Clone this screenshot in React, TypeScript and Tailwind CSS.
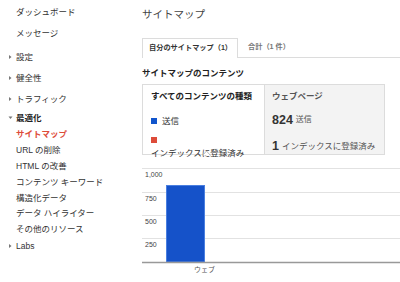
import React from 'react';

const font = { fontFamily: '"Liberation Sans", "Noto Sans CJK JP", sans-serif' };

function Arrow({ down }: { down?: boolean }) {
  return (
    <svg width="7" height="6" viewBox="0 0 7 6" className="shrink-0">
      {down ? <path d="M0.5 1.5 L4.5 1.5 L2.5 4 Z" fill="#777" /> : <path d="M1 1 L3.5 3 L1 5 Z" fill="#777" />}
    </svg>
  );
}

type Item = { label: string; h: string; arrow?: 'right' | 'down'; active?: boolean; bold?: boolean };

const items: Item[] = [
  { label: 'ダッシュボード', h: 'h-[17px]' },
  { label: 'メッセージ', h: 'h-[25px]' },
  { label: '設定', h: 'h-[22px]', arrow: 'right' },
  { label: '健全性', h: 'h-[20px]', arrow: 'right' },
  { label: 'トラフィック', h: 'h-[22px]', arrow: 'right' },
  { label: '最適化', h: 'h-[16px]', arrow: 'down', bold: true },
  { label: 'サイトマップ', h: 'h-[17px]', active: true },
  { label: 'URL の削除', h: 'h-[15px]' },
  { label: 'HTML の改善', h: 'h-[16px]' },
  { label: 'コンテンツ キーワード', h: 'h-[16px]' },
  { label: '構造化データ', h: 'h-[16px]' },
  { label: 'データ ハイライター', h: 'h-[15px]' },
  { label: 'その他のリソース', h: 'h-[16px]' },
  { label: 'Labs', h: 'h-[18px]', arrow: 'right' },
];

function Sidebar() {
  return (
    <div className="w-[142px] shrink-0 pt-[4px]">
      {items.map((it) => (
        <div
          key={it.label}
          className={`${it.h} flex items-center text-[8.5px] whitespace-nowrap ${it.arrow ? 'pl-[8px]' : 'pl-[16px]'} ${
            it.active ? 'text-[#dd4b39] font-bold' : it.bold ? 'text-[#222] font-bold' : 'text-[#333]'
          }`}
        >
          {it.arrow && (
            <span className="w-[8px]">
              <Arrow down={it.arrow === 'down'} />
            </span>
          )}
          {it.label}
        </div>
      ))}
    </div>
  );
}

function Chart() {
  const grid = [
    { y: 8, label: '1,000' },
    { y: 32, label: '750' },
    { y: 55, label: '500' },
    { y: 78, label: '250' },
  ];
  return (
    <svg width="258" height="122" className="mt-[5px] block">
      {grid.map((g) => (
        <g key={g.label}>
          <line x1="0" x2="258" y1={g.y + 0.5} y2={g.y + 0.5} stroke="#e2e2e2" />
          <text x="3" y={g.y + 8.5} fontSize="7" fill="#444" fontFamily="Liberation Sans, sans-serif">
            {g.label}
          </text>
        </g>
      ))}
      <rect x="24.5" y="25.5" width="38" height="76.5" fill="#1552c9" stroke="#4a7fe0" />
      <line x1="0" x2="258" y1="102.5" y2="102.5" stroke="#999" strokeWidth="1.5" />
      <text x="52" y="112" fontSize="7" fill="#555" fontFamily="Noto Sans CJK JP, sans-serif">
        ウェブ
      </text>
    </svg>
  );
}

export default function App() {
  return (
    <div className="w-[400px] h-[282px] overflow-hidden bg-white flex" style={font}>
      <Sidebar />
      <div className="flex-1 min-w-0">
        <div className="h-[30px] flex items-center text-[10.5px] text-[#444]">サイトマップ</div>

        <div className="mt-[8px] flex border-b border-[#dcdcdc] h-[20px]">
          <div className="w-[96px] h-[20px] border border-b-0 border-[#dcdcdc] bg-white flex items-center pl-[6px] text-[7.2px] font-bold text-[#333] whitespace-nowrap">
            自分のサイトマップ（1）
          </div>
          <div className="pl-[10px] flex items-center text-[7.2px] font-bold text-[#777] whitespace-nowrap">
            合計（1 件）
          </div>
        </div>

        <div className="mt-[8px] h-[14px] flex items-center text-[8.5px] font-bold text-[#222] whitespace-nowrap">
          サイトマップのコンテンツ
        </div>

        <div className="relative mt-[4px] w-[243px] h-[71px] border border-[#dcdcdc] flex">
          <div className="w-[122px] border-r border-[#dcdcdc] pl-[8px] pt-[5px] whitespace-nowrap">
            <div className="h-[12px] flex items-center text-[8.5px] font-bold text-[#222]">すべてのコンテンツの種類</div>
            <div className="mt-[14px] h-[10px] flex items-center text-[8.5px] text-[#333]">
              <span className="w-[6px] h-[6px] bg-[#1155cc] mr-[5px]" />
              送信
            </div>
            <div className="mt-[9px] h-[10px] flex items-center">
              <span className="w-[6px] h-[6px] bg-[#dd4b39]" />
            </div>
            <div className="mt-[3px] h-[10px] flex items-center text-[8.5px] text-[#333]">インデックスに登録済み</div>
          </div>
          <div className="flex-1 bg-[#f3f3f3] pl-[7px] pt-[5px] whitespace-nowrap">
            <div className="h-[12px] flex items-center text-[8.5px] font-bold text-[#555]">ウェブページ</div>
            <div className="mt-[11px] h-[14px] flex items-center text-[#333]">
              <span className="text-[12.5px] font-bold mr-[3px]">824</span>
              <span className="text-[8px] text-[#555]">送信</span>
            </div>
            <div className="mt-[12px] h-[14px] flex items-center text-[#333]">
              <span className="text-[12.5px] font-bold mr-[3px]">1</span>
              <span className="text-[8.5px] text-[#555]">インデックスに登録済み</span>
            </div>
          </div>
          <svg width="9" height="6" viewBox="0 0 9 6" className="absolute left-[59px] top-[65px]">
            <path d="M0.5 5.5 L4.5 1 L8.5 5.5" fill="white" stroke="#bbb" />
          </svg>
        </div>

        <Chart />
      </div>
    </div>
  );
}
